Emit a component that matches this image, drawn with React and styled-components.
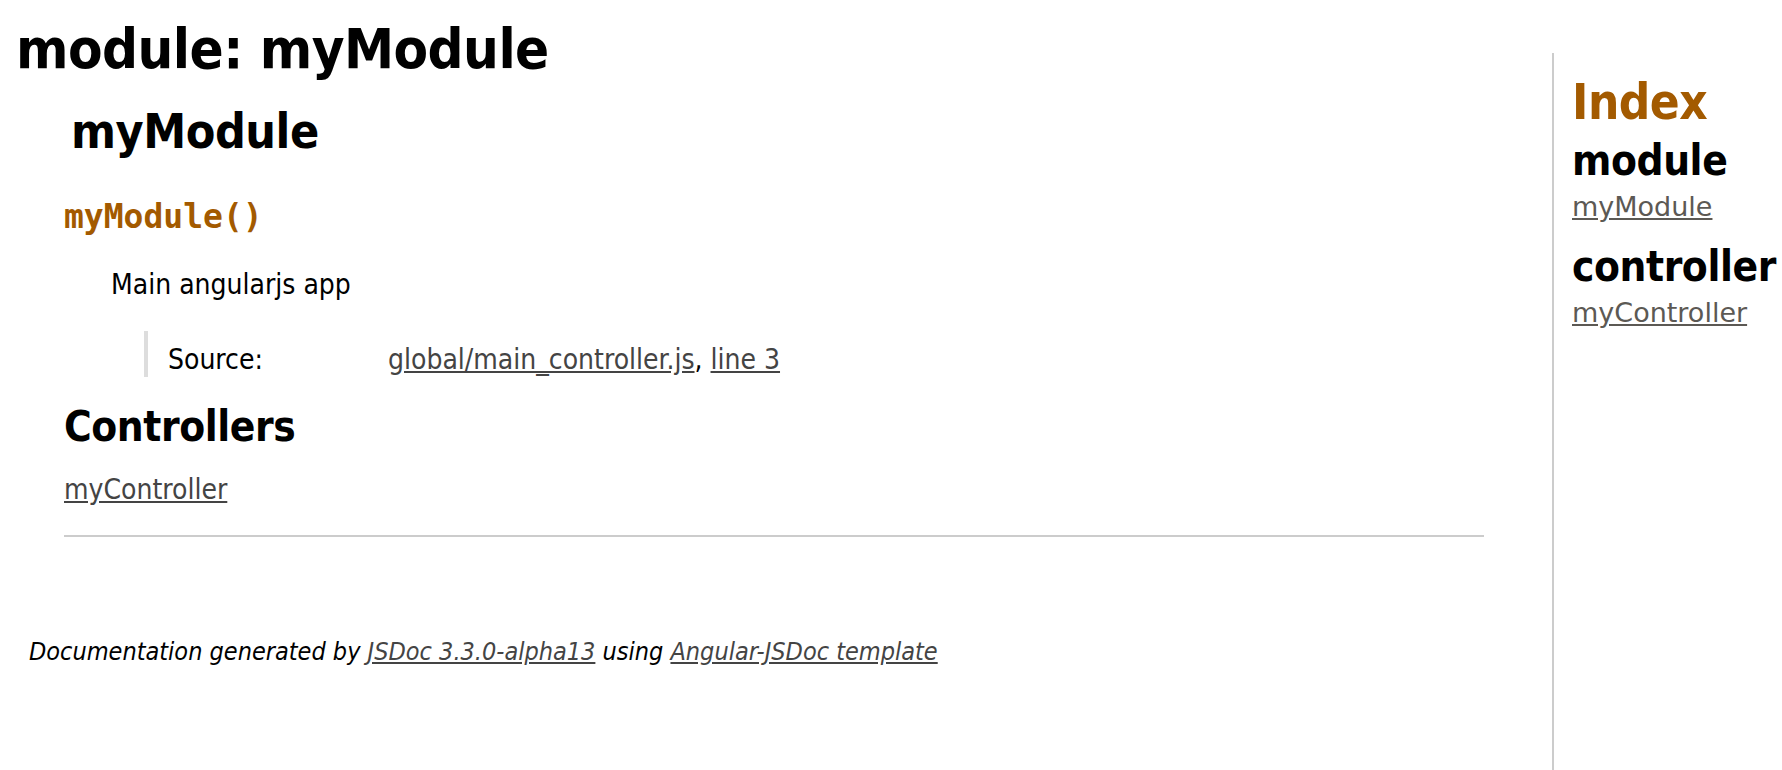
import React from "react";
import styled, { createGlobalStyle } from "styled-components";

const GlobalStyle = createGlobalStyle`
  html, body {
    margin: 0;
    padding: 0;
    background: #fff;
  }
  body {
    font-family: "DejaVu Sans Condensed", "Liberation Sans Narrow", "DejaVu Sans", sans-serif;
    font-size: 28px;
    color: #000;
  }
`;

const Page = styled.div`
  display: flex;
  align-items: stretch;
  min-height: 100vh;
`;

const Main = styled.div`
  flex: 1;
  min-width: 0;
  padding-left: 16px;
`;

const PageTitle = styled.h1`
  margin: 17px 0 22px 0;
  font-size: 56px;
  line-height: 64px;
  font-weight: bold;
  letter-spacing: -0.01em;
`;

const Section = styled.section`
  display: block;
  margin: 0 68px 0 48px;
  padding: 0 0 27px 0;
  border-bottom: 2px solid #ccc;
`;

const SectionTitle = styled.h2`
  margin: 0 0 0 7px;
  font-size: 48px;
  line-height: 56px;
  font-weight: bold;
  letter-spacing: -0.01em;
`;

const MemberName = styled.h4`
  margin: 38px 0 0 0;
  font-family: "DejaVu Sans Mono", monospace;
  font-size: 33px;
  line-height: 40px;
  font-weight: bold;
  color: #a35a00;
`;

const Description = styled.div`
  margin: 30px 0 0 47px;
  font-size: 28px;
  line-height: 36px;
`;

const Details = styled.dl`
  display: flex;
  margin: 28px 0 0 80px;
  padding: 12px 0 0 20px;
  border-left: 4px solid #ddd;
  font-size: 28px;
  line-height: 34px;
`;

const DetailLabel = styled.dt`
  width: 220px;
  margin: 0;
`;

const DetailValue = styled.dd`
  margin: 0;
`;

const Link = styled.a`
  color: #444;
  text-decoration: underline;
`;

const SubsectionTitle = styled.h3`
  margin: 26px 0 0 0;
  font-size: 42px;
  line-height: 48px;
  font-weight: bold;
  letter-spacing: -0.01em;
`;

const MemberLink = styled.div`
  margin-top: 21px;
  font-size: 28px;
  line-height: 36px;
`;

const Footer = styled.footer`
  display: block;
  margin-top: 99px;
  padding-left: 13px;
  font-style: italic;
  font-size: 25px;
  line-height: 32px;
`;

const Nav = styled.nav`
  width: 210px;
  margin-top: 53px;
  padding: 22px 0 0 18px;
  border-left: 2px solid #ccc;
`;

const NavTitle = styled.h2`
  margin: 0;
  font-size: 49px;
  line-height: 56px;
  font-weight: bold;
  letter-spacing: -0.01em;
  color: #a35a00;
`;

const NavHeading = styled.h3`
  margin: ${(p) => p.$gap}px 0 0 0;
  font-size: 42px;
  line-height: 48px;
  font-weight: bold;
  letter-spacing: -0.01em;
`;

const NavList = styled.ul`
  margin: 5px 0 0 0;
  padding: 0;
  list-style: none;
  font-family: "DejaVu Sans", "Liberation Sans", sans-serif;
  font-size: 27px;
  line-height: 34px;
`;

const NavLink = styled.a`
  color: #5c5954;
  text-decoration: underline;
`;

export default function App() {
  return (
    <>
      <GlobalStyle />
      <Page>
        <Main>
          <PageTitle>module: myModule</PageTitle>
          <Section>
            <SectionTitle>myModule</SectionTitle>
            <MemberName>myModule()</MemberName>
            <Description>Main angularjs app</Description>
            <Details>
              <DetailLabel>Source:</DetailLabel>
              <DetailValue>
                <Link href="#">global/main_controller.js</Link>,{" "}
                <Link href="#">line 3</Link>
              </DetailValue>
            </Details>
            <SubsectionTitle>Controllers</SubsectionTitle>
            <MemberLink>
              <Link href="#">myController</Link>
            </MemberLink>
          </Section>
          <Footer>
            Documentation generated by <Link href="#">JSDoc 3.3.0-alpha13</Link>{" "}
            using <Link href="#">Angular-JSDoc template</Link>
          </Footer>
        </Main>
        <Nav>
          <NavTitle>Index</NavTitle>
          <NavHeading $gap={6}>module</NavHeading>
          <NavList>
            <li>
              <NavLink href="#">myModule</NavLink>
            </li>
          </NavList>
          <NavHeading $gap={19}>controller</NavHeading>
          <NavList>
            <li>
              <NavLink href="#">myController</NavLink>
            </li>
          </NavList>
        </Nav>
      </Page>
    </>
  );
}
